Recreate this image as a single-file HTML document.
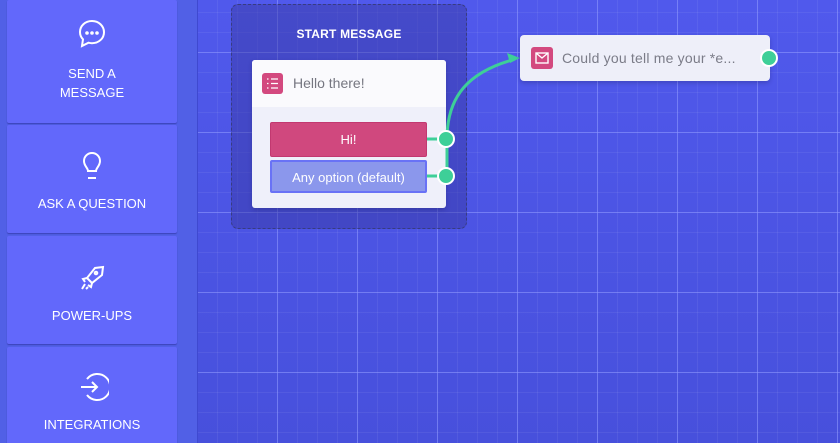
<!DOCTYPE html>
<html style="overflow:hidden;width:840px;height:443px"><head><style>
*{margin:0;padding:0;box-sizing:border-box}
body{width:840px;height:443px;overflow:hidden;font-family:"Liberation Sans",sans-serif;position:relative;background:#4b55e0}
#side{position:absolute;left:0;top:0;width:198px;height:443px;background:#5160e6;border-right:1px solid #3f49d0;overflow:hidden}
.card{position:absolute;left:7px;width:170px;background:#6268fb;border-radius:2px;box-shadow:0 1px 1px rgba(40,40,140,.5);color:#fff;text-align:center;font-size:13px;line-height:19px}
.card svg{position:absolute;left:70px}
.card .t{position:absolute;left:0;right:0}
#canvas{position:absolute;left:198px;top:0;width:642px;height:443px;
background:
linear-gradient(90deg,rgba(140,150,255,.55) 1px,transparent 1px) -1px 0/80px 80px,
linear-gradient(0deg,rgba(140,150,255,.55) 1px,transparent 1px) 0 -27px/80px 80px,
linear-gradient(90deg,rgba(255,255,255,.06) 1px,transparent 1px) -1px 0/20px 20px,
linear-gradient(0deg,rgba(255,255,255,.06) 1px,transparent 1px) 0 -7px/20px 20px,
linear-gradient(180deg,#5059ec,#4750dc)}
#grp{position:absolute;left:231px;top:4px;width:236px;height:225px;border:1.5px dashed #383c80;border-radius:7px;background:rgba(55,55,160,.45)}
#grp .h{position:absolute;top:22px;left:0;right:0;text-align:center;color:#fff;font-size:12px;font-weight:bold;letter-spacing:.2px}
#msg{position:absolute;left:252px;top:60px;width:194px;height:148px;background:#eff0fa;border-radius:3px;box-shadow:0 2px 4px rgba(30,30,100,.3);overflow:hidden}
#msg .hd{height:47px;background:#fafafd;position:relative}
.ic{position:absolute;width:21px;height:21px;background:#d3497f;border-radius:3px}
.btn{position:absolute;left:18px;width:157px;color:#fff;font-size:13px;text-align:center;border-radius:2px}
.dot{position:absolute;width:18px;height:18px;border-radius:50%;background:#3ecf98;border:2px solid #fff}
#q{position:absolute;left:520px;top:35px;width:250px;height:46px;background:#eeeff9;border-radius:4px;box-shadow:0 2px 4px rgba(30,30,100,.3)}
</style></head><body>
<div id="side">
<div class="card" style="top:0;height:123px">
<svg style="top:18px" width="30" height="32" viewBox="0 0 30 32" fill="none" stroke="#fff" stroke-width="2"><path d="M15 3C8 3 3 8 3 14c0 3 1.2 5.5 3 7.3L5 28l6.5-3.3c1.1.3 2.3.5 3.5.5 7 0 12-5 12-11S22 3 15 3z"/><circle cx="10" cy="15" r=".8" fill="#fff"/><circle cx="15" cy="15" r=".8" fill="#fff"/><circle cx="20" cy="15" r=".8" fill="#fff"/></svg>
<div class="t" style="top:64px">SEND A<br>MESSAGE</div></div>
<div class="card" style="top:125px;height:108px">
<svg style="top:24px" width="30" height="32" viewBox="0 0 30 32" fill="none" stroke="#fff" stroke-width="2"><path d="M11 22c0-3-4-5-4-10a8 8 0 0116 0c0 5-4 7-4 10z"/><path d="M11 29h8"/></svg>
<div class="t" style="top:69px">ASK A QUESTION</div></div>
<div class="card" style="top:236px;height:108px">
<svg style="top:26px" width="30" height="32" viewBox="0 0 30 32" fill="none" stroke="#fff" stroke-width="2"><path d="M26 5l-8 1-8 10 5 5 10-8z"/><circle cx="19" cy="11" r="1.3"/><path d="M10 16l-4 1 2 3M15 21l-1 4-3-2M8 22l-3 5M11 25l-2 2"/></svg>
<div class="t" style="top:70px">POWER-UPS</div></div>
<div class="card" style="top:347px;height:110px">
<svg style="top:24px" width="32" height="32" viewBox="0 0 32 32" fill="none" stroke="#fff" stroke-width="2"><path d="M10 8a13 13 0 110 16"/><path d="M4 16h16M15 11l5 5-5 5"/></svg>
<div class="t" style="top:68px">INTEGRATIONS</div></div>
</div>
<div id="canvas"></div>
<div id="grp"><div class="h">START MESSAGE</div></div>
<div id="msg"><div class="hd">
<div class="ic" style="left:10px;top:13px"><svg width="21" height="21" viewBox="0 0 21 21" stroke="#fff" stroke-width="1.3"><path d="M9 6h7M9 10.5h7M9 15h7M5 6h1.5M5 10.5h1.5M5 15h1.5"/></svg></div>
<div style="position:absolute;left:41px;top:15px;font-size:14px;color:#757680">Hello there!</div></div>
<div class="btn" style="top:62px;height:35px;line-height:33px;background:#d0487e;border:1px solid #c23870">Hi!</div>
<div class="btn" style="top:100px;height:33px;line-height:31px;background:#8b97ec;border:2px solid #6972f6">Any option (default)</div>
</div>
<svg style="position:absolute;left:0;top:0" width="840" height="443" fill="none">
<path d="M427 139h19M427 176h19M447 139v37" stroke="#3ecf98" stroke-width="3"/>
<path d="M447 139C447 95 470 72 512 60" stroke="#3ecf98" stroke-width="3"/>
<path d="M520 58l-13-5 3 10z" fill="#3ecf98"/>
</svg>
<div class="dot" style="left:437px;top:130px"></div>
<div class="dot" style="left:437px;top:167px"></div>
<div id="q">
<div class="ic" style="left:11px;top:12px;width:22px;height:22px"><svg width="22" height="22" viewBox="0 0 22 22" fill="none" stroke="#fff" stroke-width="1.4"><rect x="5" y="6" width="12" height="10"/><path d="M5 6l6 5 6-5"/></svg></div>
<div style="position:absolute;left:42px;top:15px;font-size:14px;color:#7b7c88;letter-spacing:.2px">Could you tell me your *e...</div>
</div>
<div class="dot" style="left:760px;top:49px"></div>
</body></html>
